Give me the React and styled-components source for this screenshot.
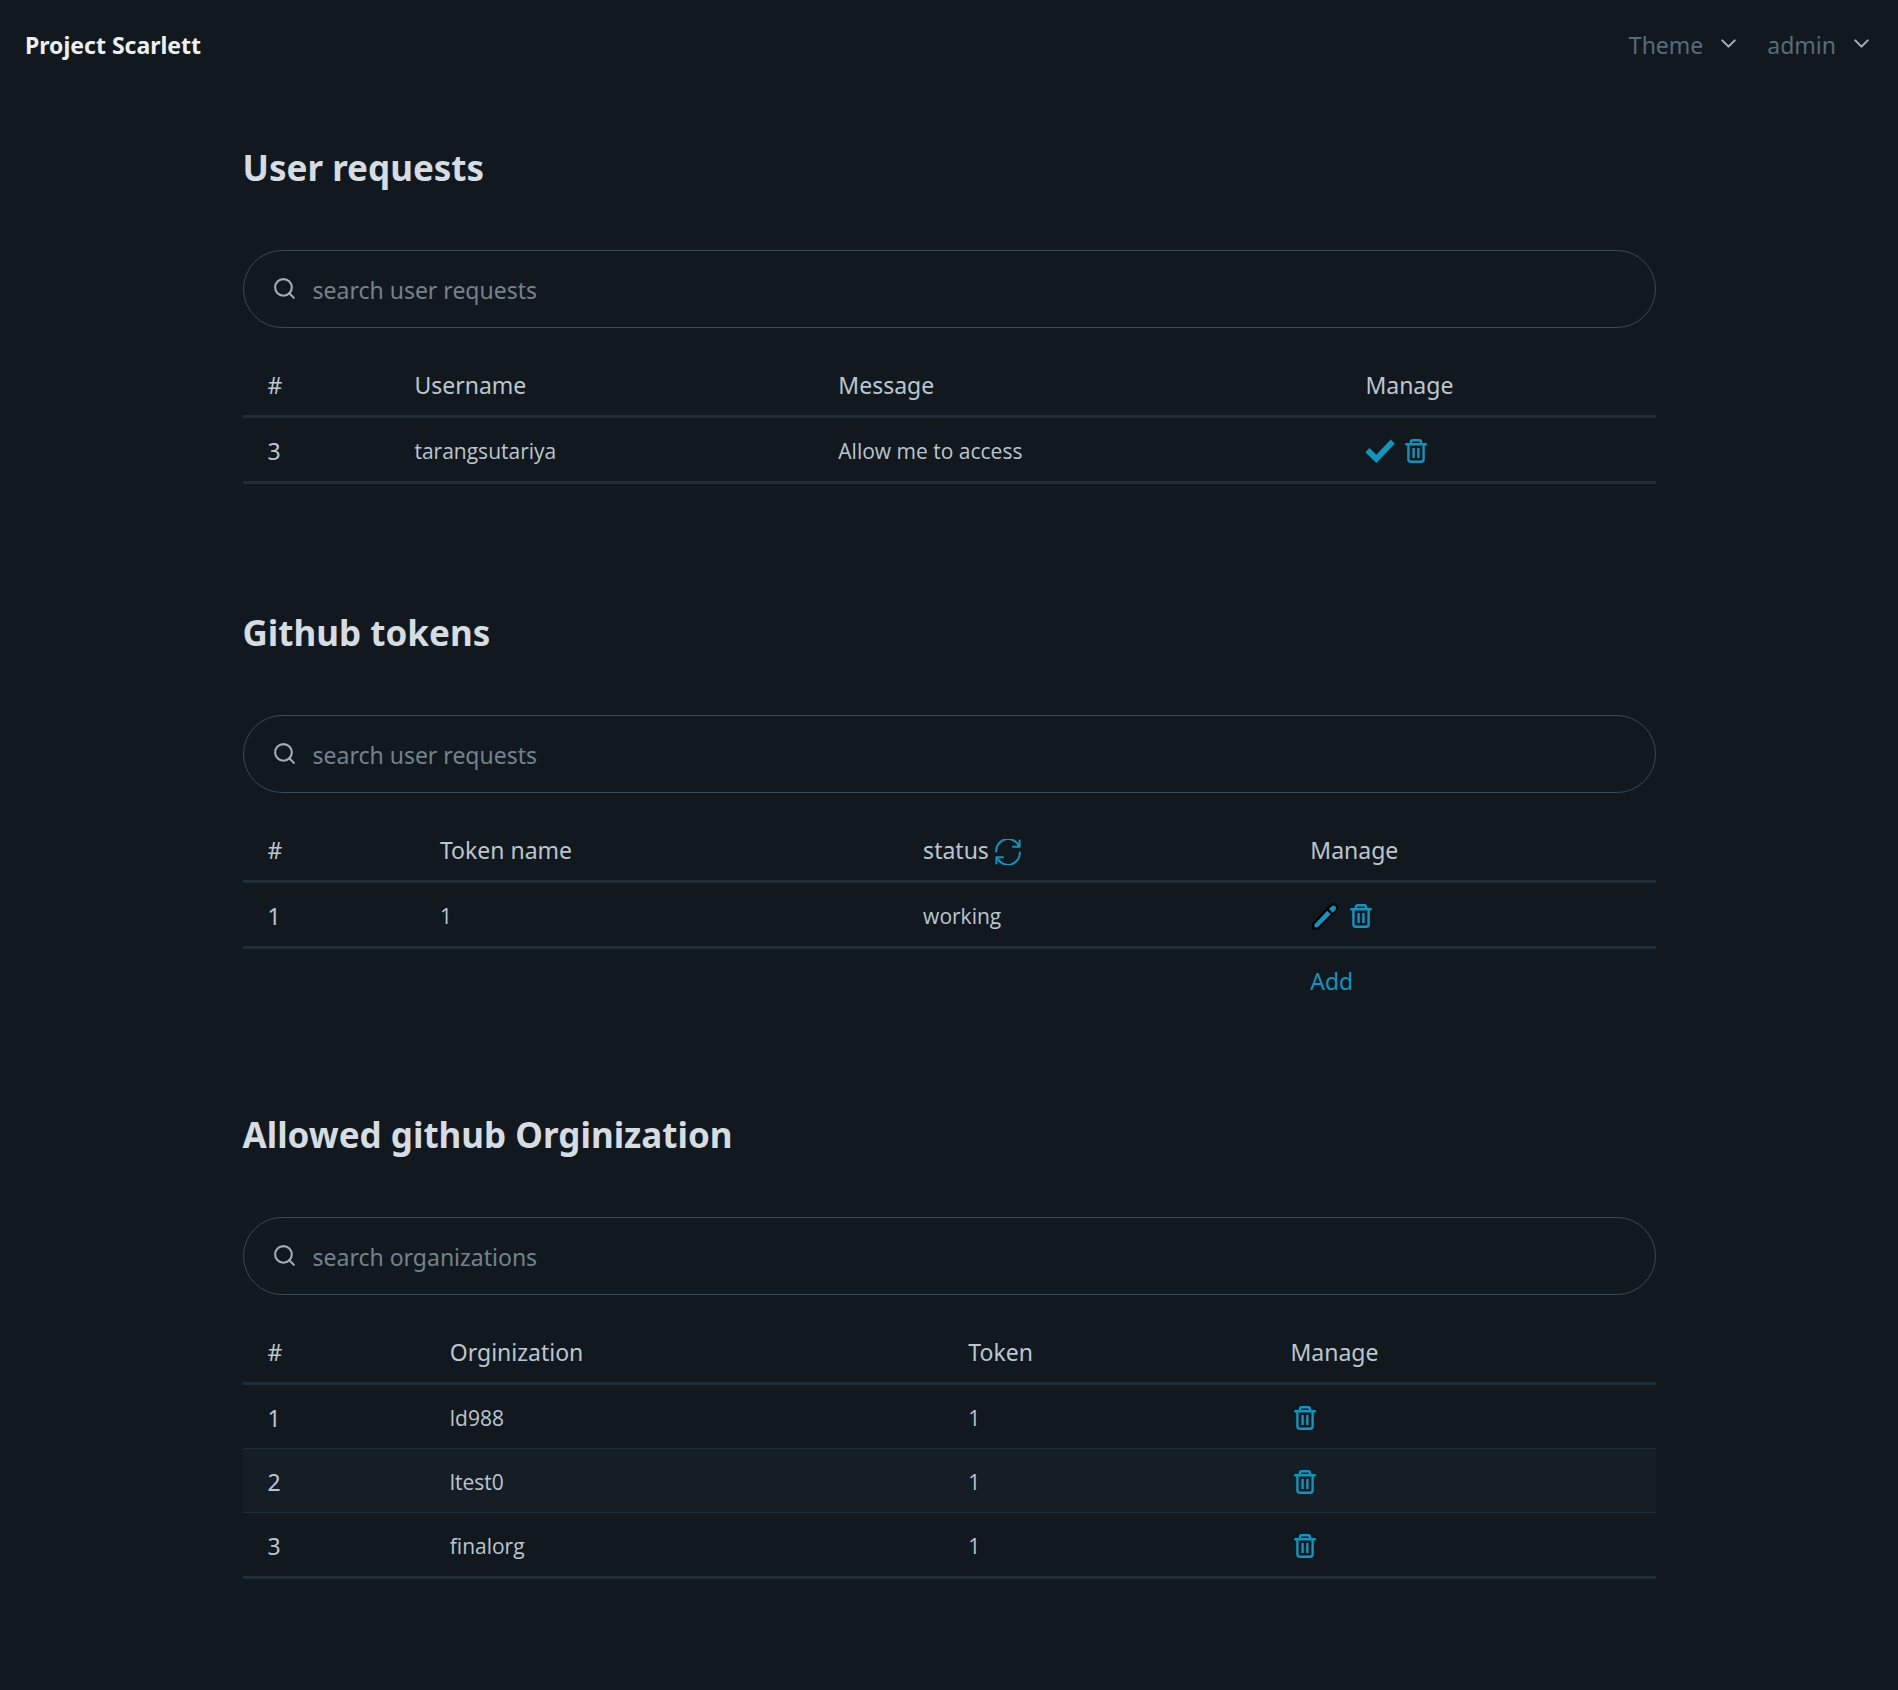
import React from "react";
import styled, { createGlobalStyle } from "styled-components";

const color = {
  page: "#11191f",
  text: "#bbc6ce",
  heading: "#d5dce2",
  brand: "#edf0f3",
  muted: "#596b78",
  placeholder: "#73828c",
  icon: "#a2afb9",
  field: "#374956",
  line: "#1f2d38",
  stripe: "#161e25",
  primary: "#1095c1",
};

const GlobalStyle = createGlobalStyle`
  * { box-sizing: border-box; }
  body {
    margin: 0;
    min-height: 100vh;
    background: ${color.page};
    color: ${color.text};
    font: 400 23px/38px "Noto Sans", "Open Sans", sans-serif;
  }
`;

const Header = styled.header`
  display: flex;
  align-items: center;
  justify-content: space-between;
  padding: 26px 24px 26px 25px;
`;

const Brand = styled.a`
  color: ${color.brand};
  font-weight: 700;
  text-decoration: none;
`;

const Menus = styled.nav`
  display: flex;
  gap: 26px;
`;

const MenuButton = styled.button`
  display: flex;
  align-items: center;
  gap: 13px;
  padding: 0;
  border: 0;
  background: none;
  color: ${color.muted};
  font: inherit;
  cursor: pointer;

  svg {
    color: ${color.icon};
    width: 25px;
    height: 25px;
    margin-bottom: 3px;
  }
`;

const Main = styled.main`
  display: flex;
  flex-direction: column;
  gap: 97px;
  max-width: 1413px;
  margin: 0 auto;
  padding: 51px 0 87px;
`;

const Section = styled.section`
  display: flex;
  flex-direction: column;
  padding-bottom: ${(p) => (p.$footed ? 0 : 25)}px;
`;

const Title = styled.h3`
  margin: 0 0 55px;
  color: ${color.heading};
  font-size: 35px;
  line-height: 54px;
  font-weight: 700;
`;

const SearchField = styled.label`
  display: flex;
  align-items: center;
  gap: 16px;
  height: 78px;
  margin-bottom: 24px;
  padding: 0 28px;
  border: 1px solid ${color.field};
  border-radius: 39px;
  color: ${color.icon};

  svg {
    flex: none;
    width: 25px;
    height: 25px;
    margin-bottom: 2px;
  }
`;

const SearchInput = styled.input`
  flex: 1;
  min-width: 0;
  height: 38px;
  padding: 2px 0 0;
  border: 0;
  outline: 0;
  background: none;
  color: ${color.text};
  font: inherit;

  &::placeholder {
    color: ${color.placeholder};
    opacity: 1;
  }
`;

const Table = styled.table`
  width: 100%;
  table-layout: fixed;
  border-collapse: separate;
  border-spacing: 0;
  text-align: left;
`;

const Col = styled.col`
  width: ${(p) => p.$width};
`;

const Cell = styled.td`
  height: ${(p) => (p.$edge ? 66 : p.$plain ? 62 : 64)}px;
  padding: 2px 25px 0;
  border-bottom: ${(p) => (p.$edge ? 3 : p.$plain ? 0 : 1)}px solid ${color.line};
  background: ${(p) => (p.$striped ? color.stripe : "transparent")};
  font-family: ${(p) => (p.$small ? '"Open Sans", "Noto Sans", sans-serif' : "inherit")};
  font-size: ${(p) => (p.$small ? 21 : 23)}px;
  font-weight: 400;
  vertical-align: middle;
`;

const Inline = styled.span`
  display: flex;
  align-items: center;
  gap: ${(p) => p.$gap}px;
`;

const IconButton = styled.button`
  display: flex;
  padding: ${(p) => (p.$lowered ? "4px 0 0" : "0")};
  border: 0;
  background: none;
  color: ${color.primary};
  cursor: pointer;
`;

const AddLink = styled.a`
  color: ${color.primary};
  text-decoration: none;
`;

const ChevronIcon = () => (
  <svg viewBox="0 0 24 24" fill="none" stroke="currentColor" strokeWidth="2" strokeLinecap="round" strokeLinejoin="round" aria-hidden="true">
    <polyline points="6 9 12 15 18 9" />
  </svg>
);

const SearchIcon = () => (
  <svg viewBox="0 0 24 24" fill="none" stroke="currentColor" strokeWidth="2" strokeLinecap="round" strokeLinejoin="round" aria-hidden="true">
    <circle cx="11" cy="11" r="8" />
    <line x1="21" y1="21" x2="16.65" y2="16.65" />
  </svg>
);

const CheckIcon = () => (
  <svg width="30" height="30" viewBox="0 0 30 30" fill="currentColor" aria-hidden="true">
    <path d="M0.4 16.2 4.5 12.1 11.4 18.8 25.7 3.6 29.8 7.7 11.4 27Z" />
  </svg>
);

const TrashIcon = () => (
  <svg width="30" height="30" viewBox="0 0 30 30" fill="none" stroke="currentColor" strokeWidth="2.4" strokeLinecap="round" strokeLinejoin="round" aria-hidden="true">
    <path d="M5.2 8.2H24.8M9.9 8V6.2Q9.9 4.2 11.9 4.2H18.1Q20.1 4.2 20.1 6.2V8" />
    <path d="M7.4 8.5V23.2Q7.4 25.8 10 25.8H20Q22.6 25.8 22.6 23.2V8.5" />
    <path d="M12.6 12V22M17.4 12V22" strokeLinecap="butt" />
  </svg>
);

const PencilIcon = () => (
  <svg width="30" height="30" viewBox="0 0 30 30" fill="none" aria-hidden="true">
    <path d="M2 28.8V22.4L19.8 3.8Q23.4 .6 26.6 3.6 29.6 6.8 26.6 10.2L8.6 28.8Z" fill="#000" />
    <path d="M4.6 26.3V23.2L17.2 9.8 20.7 13.3 7.7 26.3Z" fill="currentColor" />
    <path d="M19 8 21.7 5.2Q23.8 3.7 25.4 5.3 27 7 25.4 9L22.6 11.7Z" fill="currentColor" />
  </svg>
);

const RefreshIcon = () => (
  <svg width="26" height="26" viewBox="0 0 26 26" fill="none" stroke="currentColor" strokeWidth="2" strokeLinecap="round" strokeLinejoin="round" aria-hidden="true">
    <path d="M1.2 12.4A11.8 11.8 0 0 1 24 7.6M24.6 1.6V7.7H18" />
    <path d="M24.8 13.4A11.8 11.8 0 0 1 2 18.3M1.4 24.4V18.3H8" />
  </svg>
);

const Check = () => <IconButton aria-label="Approve"><CheckIcon /></IconButton>;
const Trash = () => <IconButton aria-label="Delete"><TrashIcon /></IconButton>;
const Pencil = () => <IconButton aria-label="Edit"><PencilIcon /></IconButton>;

const sections = [
  {
    title: "User requests",
    placeholder: "search user requests",
    widths: ["10.4%", "30%", "37.3%", "22.3%"],
    head: ["#", "Username", "Message", "Manage"],
    rows: [["3", "tarangsutariya", "Allow me to access"]],
    actions: [Check, Trash],
  },
  {
    title: "Github tokens",
    placeholder: "search user requests",
    widths: ["12.2%", "34.2%", "27.4%", "26.2%"],
    head: [
      "#",
      "Token name",
      <Inline $gap={6} key="status">
        status
        <IconButton $lowered aria-label="Refresh status"><RefreshIcon /></IconButton>
      </Inline>,
      "Manage",
    ],
    rows: [["1", "1", "working"]],
    actions: [Pencil, Trash],
    canAdd: true,
  },
  {
    title: "Allowed github Orginization",
    placeholder: "search organizations",
    widths: ["12.9%", "36.7%", "22.8%", "27.6%"],
    head: ["#", "Orginization", "Token", "Manage"],
    rows: [["1", "ld988", "1"], ["2", "ltest0", "1"], ["3", "finalorg", "1"]],
    actions: [Trash],
  },
];

function DataSection({ title, placeholder, widths, head, rows, actions, canAdd }) {
  return (
    <Section $footed={canAdd}>
      <Title>{title}</Title>
      <SearchField>
        <SearchIcon />
        <SearchInput type="text" placeholder={placeholder} aria-label={placeholder} />
      </SearchField>
      <Table>
        <colgroup>
          {widths.map((w, i) => <Col key={i} $width={w} />)}
        </colgroup>
        <thead>
          <tr>
            {head.map((h, i) => <Cell as="th" scope="col" key={i} $edge>{h}</Cell>)}
          </tr>
        </thead>
        <tbody>
          {rows.map((row, r) => {
            const look = { $edge: r === rows.length - 1, $striped: r % 2 === 1 };
            return (
              <tr key={r}>
                <Cell as="th" scope="row" {...look}>{row[0]}</Cell>
                {row.slice(1).map((v, i) => <Cell key={i} $small {...look}>{v}</Cell>)}
                <Cell {...look}>
                  <Inline $gap={6}>
                    {actions.map((Action, i) => <Action key={i} />)}
                  </Inline>
                </Cell>
              </tr>
            );
          })}
        </tbody>
        {canAdd && (
          <tfoot>
            <tr>
              <Cell $plain colSpan={3} />
              <Cell $plain><AddLink href="#add">Add</AddLink></Cell>
            </tr>
          </tfoot>
        )}
      </Table>
    </Section>
  );
}

export default function App() {
  return (
    <>
      <GlobalStyle />
      <Header>
        <Brand href="#home">Project Scarlett</Brand>
        <Menus>
          <MenuButton aria-haspopup="true">Theme<ChevronIcon /></MenuButton>
          <MenuButton aria-haspopup="true">admin<ChevronIcon /></MenuButton>
        </Menus>
      </Header>
      <Main>
        {sections.map((s) => <DataSection key={s.title} {...s} />)}
      </Main>
    </>
  );
}
